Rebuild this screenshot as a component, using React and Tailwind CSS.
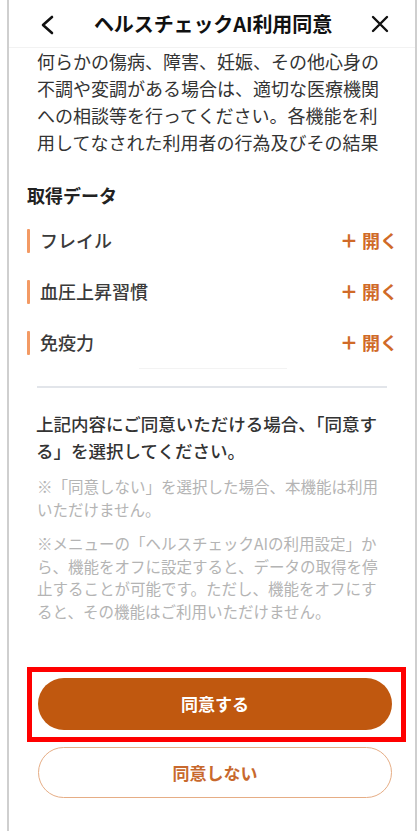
import React from "react";

const items = ["フレイル", "血圧上昇習慣", "免疫力"];

export default function App() {
  return (
    <div
      className="w-[420px] min-h-[831px] bg-white"
      style={{ fontFamily: '"Noto Sans CJK JP", "Noto Sans", sans-serif' }}
    >
      <div className="ml-[7px] w-[410px] min-h-[831px] border-x-2 border-[#cfcfcf] bg-white flex flex-col">
        {/* Header */}
        <div className="h-[48px] flex items-center justify-between px-[32px] border-b border-[#f2f2f2]">
          <svg width="16" height="20" viewBox="0 0 16 20" className="-ml-[2px] mt-[2px]">
            <path d="M13 2 L4 10 L13 18" fill="none" stroke="#111" strokeWidth="2.6" strokeLinecap="round" strokeLinejoin="round" />
          </svg>
          <div className="text-[20px] font-bold text-[#111] tracking-[-0.1px] mt-[1px]">ヘルスチェックAI利用同意</div>
          <svg width="18" height="18" viewBox="0 0 18 18" className="mr-[-6px] mt-[1px]">
            <path d="M2 2 L16 16 M16 2 L2 16" fill="none" stroke="#111" strokeWidth="2.4" strokeLinecap="round" />
          </svg>
        </div>

        {/* Scrolled paragraph */}
        <p className="px-[28px] text-[18px] leading-[27px] text-[#333]">
          何らかの傷病、障害、妊娠、その他心身の不調や変調がある場合は、適切な医療機関への相談等を行ってください。各機能を利用してなされた利用者の行為及びその結果
        </p>

        {/* Acquired data */}
        <div className="mt-[26px] pl-[18px] pr-[17px]">
          <h2 className="text-[18px] leading-[27px] font-bold text-[#222]">取得データ</h2>
          <div className="mt-[6px] flex flex-col">
            {items.map((t) => (
              <div key={t} className="h-[51px] flex items-center justify-between">
                <div className="flex items-center">
                  <span className="w-[3px] h-[24px] bg-[#f39a64] rounded-[1px]" />
                  <span className="ml-[10px] text-[18px] font-medium text-[#3a3a3a]">{t}</span>
                </div>
                <div className="flex items-center text-[18px] font-bold text-[#d06a28]">
                  <span className="mr-[4px] font-black">＋</span>
                  <span>開く</span>
                </div>
              </div>
            ))}
          </div>
          <div className="mx-auto w-[148px] h-px bg-[#f3f3f3]" />
        </div>

        {/* Divider */}
        <div className="mx-[28px] mt-[17px] h-[2px] bg-[#e2e5ea]" />

        {/* Agreement text */}
        <div className="px-[27px] mt-[22px]">
          <p className="text-[17.5px] leading-[27px] font-medium text-[#333]">
            上記内容にご同意いただける場合、「同意する」を選択してください。
          </p>
          <p className="mt-[11px] px-[1px] text-[15.5px] leading-[22.5px] text-[#b4b4b4]">
            ※「同意しない」を選択した場合、本機能は利用いただけません。
          </p>
          <p className="mt-[12px] px-[1px] text-[15.5px] leading-[22.5px] text-[#b4b4b4]">
            ※メニューの「ヘルスチェックAIの利用設定」から、機能をオフに設定すると、データの取得を停止することが可能です。ただし、機能をオフにすると、その機能はご利用いただけません。
          </p>
        </div>

        {/* Buttons */}
        <div className="mt-[45px] pl-[18px] pr-[9px]">
          <div className="border-[5px] border-[#ff0000] pl-[6px] pr-[9px] pt-[6px] pb-[7px]">
            <button className="w-full h-[52px] rounded-full bg-[#c0580f] text-white text-[17px] font-bold">
              同意する
            </button>
          </div>
          <div className="mt-[5px] pl-[11px] pr-[14px]">
            <button className="w-full h-[51px] rounded-full border-[1.5px] border-[#e6ad85] bg-white text-[#c8692e] text-[17px] font-bold">
              同意しない
            </button>
          </div>
        </div>
      </div>
    </div>
  );
}
